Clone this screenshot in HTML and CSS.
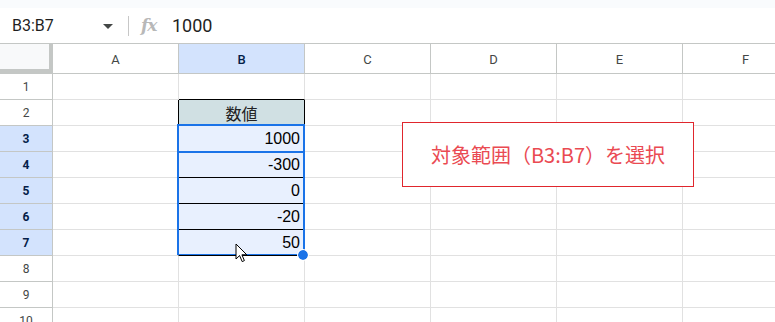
FILE: index.html
```html
<!DOCTYPE html>
<html lang="ja">
<head>
<meta charset="utf-8">
<link rel="stylesheet" href="styles.css">
</head>
<body>
<div class="topstrip"></div>
<div class="formulabar">
  <div class="namebox">B3:B7</div>
  <svg class="drop" width="10" height="5" viewBox="0 0 10 5"><path d="M0 0H10L5 5Z" fill="#444746"/></svg>
  <div class="sep"></div>
  <div class="fx">fx</div>
  <div class="fvalue">1000</div>
</div>
<div class="sheet">
  <div class="grid">
    <div class="corner"></div>
    <div class="ch">A</div><div class="ch sel">B</div><div class="ch">C</div><div class="ch">D</div><div class="ch">E</div><div class="ch">F</div>

    <div class="rh">1</div>
    <div class="c"></div><div class="c bb"></div><div class="c"></div><div class="c"></div><div class="c"></div><div class="c"></div>

    <div class="rh">2</div>
    <div class="c br"></div><div class="c tbl head">数値</div><div class="c"></div><div class="c"></div><div class="c"></div><div class="c"></div>

    <div class="rh sel">3</div>
    <div class="c br"></div><div class="c tbl num">1000</div><div class="c"></div><div class="c"></div><div class="c"></div><div class="c"></div>

    <div class="rh sel">4</div>
    <div class="c br"></div><div class="c tbl num">-300</div><div class="c"></div><div class="c"></div><div class="c"></div><div class="c"></div>

    <div class="rh sel">5</div>
    <div class="c br"></div><div class="c tbl num">0</div><div class="c"></div><div class="c"></div><div class="c"></div><div class="c"></div>

    <div class="rh sel">6</div>
    <div class="c br"></div><div class="c tbl num">-20</div><div class="c"></div><div class="c"></div><div class="c"></div><div class="c"></div>

    <div class="rh sel">7</div>
    <div class="c br"></div><div class="c tbl num">50</div><div class="c"></div><div class="c"></div><div class="c"></div><div class="c"></div>

    <div class="rh">8</div>
    <div class="c"></div><div class="c"></div><div class="c"></div><div class="c"></div><div class="c"></div><div class="c"></div>

    <div class="rh">9</div>
    <div class="c"></div><div class="c"></div><div class="c"></div><div class="c"></div><div class="c"></div><div class="c"></div>

    <div class="rh">10</div>
    <div class="c"></div><div class="c"></div><div class="c"></div><div class="c"></div><div class="c"></div><div class="c"></div>
  </div>
  <div class="range"></div>
  <div class="active"></div>
  <div class="handle"></div>
  <svg class="cursor" width="13" height="20" viewBox="0 0 13 20"><path d="M1 1V16L4.6 12.6L7.2 18.6L9.4 17.6L6.9 11.8H11.8Z" fill="#fff" stroke="#000" stroke-width="1" stroke-linejoin="round"/></svg>
  <div class="callout">対象範囲（B3:B7）を選択</div>
</div>
</body>
</html>
```

FILE: styles.css
```css
html, body {
  margin: 0;
  padding: 0;
  background: #fff;
  overflow: hidden;
  width: 775px;
  height: 322px;
  font-family: Roboto, "Liberation Sans", "Noto Sans CJK JP", sans-serif;
}

.topstrip {
  height: 8px;
  background: #f9fbfd;
}

.formulabar {
  height: 35px;
  display: flex;
  align-items: center;
  box-sizing: border-box;
}

.namebox {
  font-size: 16px;
  color: #1f1f1f;
  margin-left: 12px;
  width: 91px;
}

.drop {
  margin-top: 1px;
}

.sep {
  width: 1px;
  height: 20px;
  background: #c7c7c7;
  margin-left: 15px;
  margin-right: 12px;
}

.fx {
  font-family: "DejaVu Serif", "Liberation Serif", serif;
  font-style: italic;
  font-weight: bold;
  font-size: 17px;
  color: #b8b8b8;
  width: 20px;
  letter-spacing: -1px;
  margin-top: -2px;
}

.fvalue {
  font-size: 18px;
  color: #1f1f1f;
  margin-left: 11px;
}

.sheet {
  position: relative;
}

.grid {
  display: grid;
  grid-template-columns: 53px repeat(6, 126px);
  grid-template-rows: 31px repeat(10, 26px);
}

.grid > div {
  box-sizing: border-box;
}

.corner {
  background: #f8f9fa;
  border-top: 1px solid #c4c7c5;
  border-right: 4px solid #c4c7c5;
  border-bottom: 5px solid #c4c7c5;
}

.ch {
  border-top: 1px solid #c4c7c5;
  border-right: 1px solid #c4c7c5;
  border-bottom: 1px solid #c4c7c5;
  display: flex;
  align-items: center;
  justify-content: center;
  font-size: 13px;
  color: #444746;
  padding-top: 1px;
}

.ch.sel {
  background: #d3e3fd;
  color: #041e49;
  font-weight: 500;
}

.rh {
  border-right: 1px solid #c4c7c5;
  border-bottom: 1px solid #c4c7c5;
  display: flex;
  align-items: center;
  justify-content: center;
  font-size: 12px;
  color: #444746;
}

.rh.sel {
  background: #d3e3fd;
  color: #041e49;
  font-weight: bold;
}

.c {
  border-right: 1px solid #e1e1e1;
  border-bottom: 1px solid #e1e1e1;
}

.c.bb {
  border-bottom-color: #000;
}

.c.br {
  border-right-color: #000;
}

.tbl {
  border-right-color: #000;
  border-bottom-color: #000;
  font-family: "Liberation Sans", Arial, "Noto Sans CJK JP", sans-serif;
  font-size: 16px;
  color: #000;
}

.head {
  background: #d0e0e3;
  display: flex;
  align-items: center;
  justify-content: center;
  font-family: "Noto Sans CJK JP", sans-serif;
  font-size: 16px;
  color: #222;
}

.num {
  background: #e8f0fe;
  display: flex;
  align-items: flex-end;
  justify-content: flex-end;
  padding: 0 4px 3px 0;
  line-height: 18px;
}

.range {
  position: absolute;
  left: 177px;
  top: 81px;
  width: 128px;
  height: 131px;
  box-sizing: border-box;
  border: 2px solid #1a73e8;
  border-bottom-width: 1px;
}

.active {
  position: absolute;
  left: 177px;
  top: 81px;
  width: 128px;
  height: 29px;
  box-sizing: border-box;
  border: 2px solid #1a73e8;
}

.handle {
  position: absolute;
  left: 298px;
  top: 207px;
  width: 10px;
  height: 10px;
  box-sizing: border-box;
  border-radius: 50%;
  background: #1a73e8;
  outline: 1px solid #fff;
}

.cursor {
  position: absolute;
  left: 235px;
  top: 200px;
}

.callout {
  position: absolute;
  left: 402px;
  top: 79px;
  width: 292px;
  height: 65px;
  box-sizing: border-box;
  border: 1px solid #e0262d;
  background: #fff;
  display: flex;
  align-items: center;
  justify-content: center;
  font-family: "Noto Sans CJK JP", sans-serif;
  font-size: 20px;
  color: #ea4a52;
}
```
